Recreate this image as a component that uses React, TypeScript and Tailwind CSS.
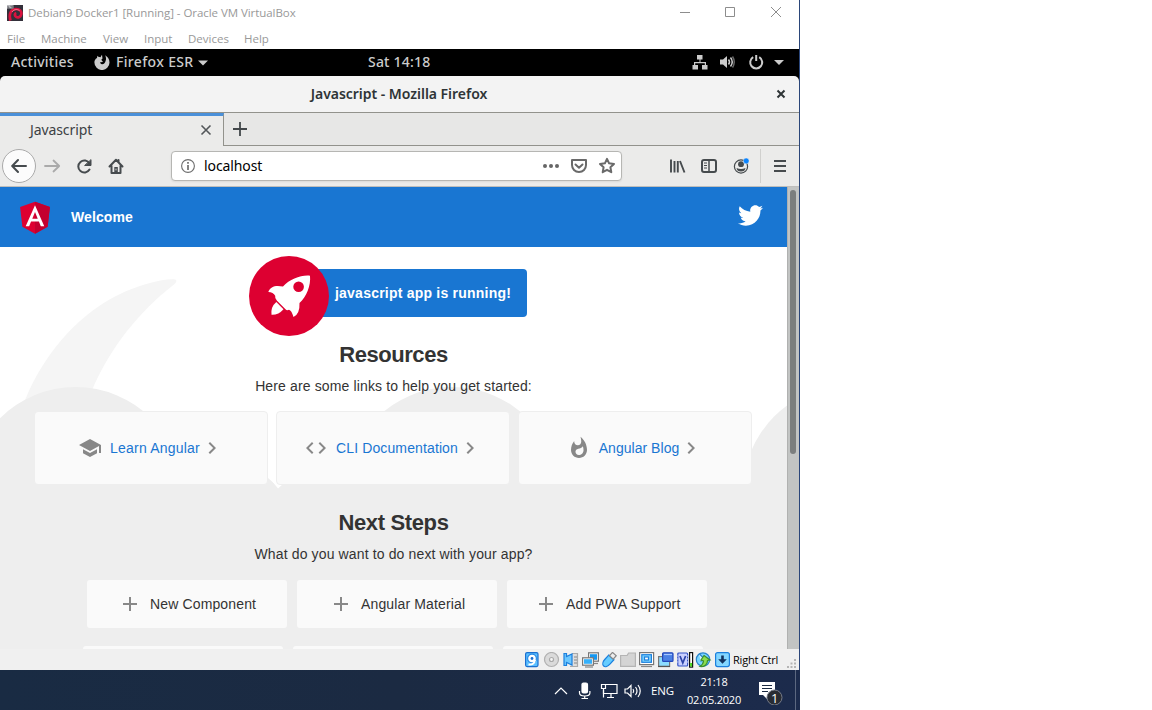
import React from "react";
import { FaTwitter } from "react-icons/fa";

type IconProps = { d: string; className?: string };

function MIcon({ d, className = "" }: IconProps) {
  return (
    <svg viewBox="0 0 24 24" className={`h-6 w-6 shrink-0 fill-[#888] ${className}`}>
      <path d={d} />
    </svg>
  );
}

const SCHOOL = "M5 13.18v4L12 21l7-3.82v-4L12 17l-7-3.82zM12 3L1 9l11 6 9-4.91V17h2V9L12 3z";
const CODE =
  "M9.4 16.6L4.8 12l4.6-4.6L8 6l-6 6 6 6 1.4-1.4zm5.2 0l4.6-4.6-4.6-4.6L16 6l6 6-6 6-1.4-1.4z";
const FIRE =
  "M13.5.67s.74 2.65.74 4.8c0 2.06-1.35 3.73-3.41 3.73-2.07 0-3.63-1.67-3.63-3.73l.03-.36C5.21 7.51 4 10.62 4 14c0 4.42 3.58 8 8 8s8-3.58 8-8C20 8.61 17.41 3.8 13.5.67zM11.71 19c-1.78 0-3.22-1.4-3.22-3.14 0-1.62 1.05-2.76 2.81-3.12 1.77-.36 3.6-1.21 4.62-2.58.39 1.29.59 2.65.59 4.04 0 2.65-2.15 4.8-4.8 4.8z";
const CHEVRON = "M10 6L8.59 7.41 13.17 12l-4.58 4.59L10 18l6-6z";
const PLUS = "M19 13h-6v6h-2v-6H5v-2h6V5h2v6h6v2z";

function HostTitleBar() {
  return (
    <div className="flex h-[25px] items-center bg-white font-['Open_Sans',sans-serif] text-[11.5px] text-[#999]">
      <svg viewBox="0 0 16 16" className="ml-[7px] h-4 w-4">
        <rect width="16" height="16" fill="#33303a" />
        <path d="M3.500 15.500C1.500 9 4 4 9 4c4 0 5.800 2.500 5.300 5.200-.5 2.600-3.200 3.800-5.200 2.600C7.300 10.700 7.500 8.500 9.300 8" fill="none" stroke="#d9133f" strokeWidth="2.700" />
        <path d="M5 7C6.500 4.700 9.500 3.700 12.500 5.500" fill="none" stroke="#ff7d96" strokeWidth="1" />
        <rect width="6.500" height="3.500" fill="#b9b9bd" />
        <path d="M1 1v2h1.500M4 .5v1.500h2M6 0v3.500" stroke="#4b4b50" strokeWidth=".7" fill="none" />
      </svg>
      <span className="ml-[5px] whitespace-nowrap tracking-[-0.055px]">Debian9 Docker1 [Running] - Oracle VM VirtualBox</span>
      <svg viewBox="0 0 120 25" className="ml-auto h-[25px] w-[120px]" fill="none" stroke="#8d8d8d">
        <path d="M1 12.500h10M46.500 7.500h9v9h-9zM92 7l10 10M102 7L92 17" />
      </svg>
    </div>
  );
}

function HostMenu() {
  return (
    <div className="flex h-6 items-center bg-white pt-[3px] pl-[7px] font-['Open_Sans',sans-serif] text-[11.5px] text-[#999]">
      <span className="w-[34px]">File</span>
      <span className="w-[62px]">Machine</span>
      <span className="w-[41px]">View</span>
      <span className="w-[44px]">Input</span>
      <span className="w-[56px]">Devices</span>
      <span>Help</span>
    </div>
  );
}

function GnomeBar() {
  return (
    <div className="flex h-[27px] items-center bg-black font-['Noto_Sans',sans-serif] text-[14px] leading-5 font-medium text-[#ccc]">
      <span className="ml-[11px] w-[83px] pb-[2px] tracking-[0.25px]">Activities</span>
      <svg viewBox="0 0 16 16" className="mb-px h-4 w-4">
        <path d="M8 .8C7.500 1.500 6.800 2.500 6.500 3.300L4.300 2.800 3.400 1.800 3 4.100C1.200 5 .4 6.800.4 8.500A7.500 7.500 0 0 0 15.500 8.500C15.500 5 13.500 2.500 11 1.300c1 1.400 1.300 3.300.8 5C11.200 8.800 9.800 10.500 8 10.300 6.700 10.200 6 9.200 6.200 8.300l2.800-.3-1.700-2.200L8.500 4.500Z" fill="#ccc" />
      </svg>
      <span className="ml-[6px] w-[81px] pb-[2px] tracking-[0.35px] whitespace-nowrap">Firefox ESR</span>
      <svg viewBox="0 0 10 6" className="ml-[1px] h-[6px] w-[10px]"><path d="M0 .5h10L5 5.500z" fill="#ccc" /></svg>
      <span className="ml-[160px] pb-[2px] tracking-[0.2px] whitespace-nowrap">Sat 14:18</span>
      <svg viewBox="0 0 92 16" className="mr-[15px] mb-px ml-auto h-4 w-[92px]" fill="#ccc">
        <path d="M5 1h5.500v4.500H8.500V8H14v3h1.500v4.500H10V11h2.800V9.200H3.200V11H6v4.500H.5V11H2V8h5.500V5.500H5z" />
        <path d="M28 5.500h3L35 2v12l-4-3.500h-3z" />
        <path d="M36.500 5.500q2 2.500 0 5M38.500 3.500q3.500 4.500 0 9" fill="none" stroke="#ccc" strokeWidth="1.500" />
        <path d="M40.500 2.500q3.500 5.500 0 11" fill="none" stroke="#666" strokeWidth="1.500" />
        <path d="M61.200 3.200a6 6 0 1 0 6 0M64.200 1v6" fill="none" stroke="#ccc" strokeWidth="2" />
        <path d="M82 6h10l-5 5z" />
      </svg>
    </div>
  );
}

function FirefoxTitle() {
  return (
    <div className="bg-black">
      <div className="flex h-9 items-center rounded-t-[5px] bg-[#f3f3f3] font-['Noto_Sans',sans-serif] text-[14px] leading-5 font-semibold text-[#2e3436]">
        <span className="w-[776px] pl-[22px] text-center tracking-[-0.03px]">
          Javascript - Mozilla Firefox
        </span>
        <svg viewBox="0 0 10 10" className="h-[10px] w-[10px]">
          <path d="M1.500 1.500l7 7M8.500 1.500l-7 7" stroke="#2e3436" strokeWidth="2" />
        </svg>
      </div>
    </div>
  );
}

function Tabs() {
  return (
    <div className="flex h-[34px] border-t border-[#92928c] bg-[#e7e7e6] font-['Noto_Sans',sans-serif]">
      <div className="flex w-[224px] items-center border-t-[3px] border-r border-t-[#4a90d9] border-r-[#92928c] bg-[#ebebea] text-[14px] leading-5 text-[#3c4144]">
        <span className="w-[170px] pb-[3px] pl-[30px] tracking-[-0.1px]">Javascript</span>
        <svg viewBox="0 0 12 12" className="mb-[2px] ml-[30px] h-3 w-3"><path d="M1.500 1.500l9 9M10.500 1.500l-9 9" stroke="#53575a" strokeWidth="1.600" /></svg>
      </div>
      <div className="flex flex-1 items-center border-b border-[#92928c] pl-[9px]">
        <svg viewBox="0 0 14 14" className="h-[14px] w-[14px]"><path d="M7 0v14M0 7h14" stroke="#42474a" strokeWidth="1.800" /></svg>
      </div>
    </div>
  );
}

function Toolbar() {
  return (
    <div className="flex h-[41px] items-center border-b border-[#bebebc] bg-[#ebebea] font-['Noto_Sans',sans-serif]">
      <div className="ml-[2px] flex h-[34px] w-[34px] items-center justify-center rounded-full border border-[#aaa] bg-[#fcfcfc]">
        <svg viewBox="0 0 16 16" className="h-4 w-4" fill="none" stroke="#464b4e" strokeWidth="2" strokeLinecap="round" strokeLinejoin="round"><path d="M15 8H1.500M7 2L1.200 8 7 14" /></svg>
      </div>
      <svg viewBox="0 0 80 18" className="ml-2 h-[18px] w-20" fill="none" stroke="#464b4e" strokeWidth="2" strokeLinecap="round" strokeLinejoin="round">
        <path d="M1 9h14M9.500 3.500L15.200 9l-5.700 5.500" stroke="#aaa" strokeWidth="1.800" />
        <path d="M45.500 6.500A6 6 0 1 0 45.500 12.500" />
        <path d="M47 3v5.500h-6z" fill="#464b4e" strokeWidth="1" />
        <path d="M65.500 9.500L72 2.800l6.500 6.700M67.500 9v7h9V9M74.500 3v2" />
        <path d="M70.300 10h3.500v6.500h-3.500z" fill="#464b4e" stroke="none" />
        <path d="M72 12v1" stroke="#fff" strokeWidth=".8" />
      </svg>
      <div className="ml-[47px] flex h-[30px] w-[451px] items-center rounded-[4px] border border-[#b6b6b3] bg-white text-[14px] leading-5 text-black shadow-[0_1px_2px_rgba(0,0,0,0.08)]">
        <svg viewBox="0 0 14 14" className="ml-[9px] h-[14px] w-[14px]" fill="none" stroke="#6d6d6d"><circle cx="7" cy="7" r="6.400" strokeWidth="1.100" /><path d="M7 6v5M7 3v1.700" strokeWidth="1.700" /></svg>
        <span className="ml-[9px] tracking-[-0.1px]">localhost</span>
        <svg viewBox="0 0 74 18" className="mr-[5px] ml-auto h-[18px] w-[74px]" fill="none" stroke="#6a6a6a" strokeWidth="2" strokeLinejoin="round" strokeLinecap="round">
          <g fill="#666" stroke="none"><circle cx="3" cy="9" r="2" /><circle cx="9" cy="9" r="2" /><circle cx="15" cy="9" r="2" /></g>
          <path d="M30 3h14v5c0 4-3 7-7 7s-7-3-7-7z" /><path d="M33.500 7.500l3.500 3.200 3.500-3.200" />
          <path d="M65 1.800l2.100 4.500 4.900.6-3.600 3.400.9 4.900-4.300-2.400-4.300 2.400.9-4.900L58 6.900l4.900-.6z" />
        </svg>
      </div>
      <svg viewBox="0 0 80 16" className="ml-[47px] h-4 w-20" fill="none" stroke="#464b4e" strokeWidth="2">
        <path d="M2 1.500v13M5.500 3v11.500M8.800 3v11.500M11 3l4.500 11.500" strokeWidth="1.900" />
        <rect x="33" y="2" width="14" height="12" rx="2" /><path d="M40 2v12" strokeWidth="1.500" /><path d="M35 5h3M35 7.500h3M35 10h3" strokeWidth="1" />
        <circle cx="72" cy="8.500" r="6.600" strokeWidth="1.200" /><circle cx="72" cy="6.200" r="2.900" fill="#464b4e" stroke="none" /><path d="M67.500 10q4.500 2 9 0-.5 3.500-4.500 3.500t-4.500-3.500" fill="#464b4e" stroke="none" />
        <circle cx="77.200" cy="2.900" r="2.900" fill="#0a84ff" stroke="#ebebea" strokeWidth=".5" />
      </svg>
      <div className="ml-[11px] h-[34px] w-px bg-[#d0d0ce]" />
      <svg viewBox="0 0 13 14" className="ml-[13px] h-[14px] w-[13px]"><path d="M0 2h12M0 7h12M0 12h12" stroke="#464b4e" strokeWidth="2" /></svg>
    </div>
  );
}

function Backdrop() {
  return (
    <svg viewBox="0 187 787 462" className="absolute inset-0 h-[462px] w-[787px]">
      <rect y="187" width="787" height="462" fill="#fff" />
      <path d="M173 279.300C178 279 177 282.500 173 285.200C140 311 111 346 92 390L70 430L20 415C37 360 83 300 150 283Q162 279.500 173 279.300Z" fill="#f5f5f5" />
      <g fill="#eee">
        <circle cx="75.500" cy="494" r="107" />
        <circle cx="452" cy="494" r="107" />
        <circle cx="850" cy="492" r="107" />
        <rect y="484" width="787" height="165" />
        <path d="M200 478h68l8 7H200z" />
      </g>
      <path d="M268 476l10 12.500 5-4.500V474z" fill="#fff" />
    </svg>
  );
}

function Rocket() {
  return (
    <svg viewBox="249 255.500 80 80" className="absolute top-[68.500px] left-[249px] h-20 w-20">
      <circle cx="289" cy="295.500" r="40" fill="#dd0031" />
      <path d="M310 275.200C301 274.300 290 278.500 283 286C276 284.500 270.500 285.500 268.300 291.500C271.500 291.600 274 293 275.200 295.300Q274.600 298 277 300.200L285.500 308.800Q287 310.300 289 309.200Q291.500 309.800 293.500 316.500Q300 313.500 299.500 302.500C306.500 296 311 285 310 275.200Z" fill="#fff" />
      <circle cx="298.600" cy="286.200" r="5.300" fill="#dd0031" />
      <path d="M276.300 301.500L283.500 308.700Q278.500 314.500 271.500 314.200Q270.500 306.500 276.300 301.500Z" fill="#fff" />
    </svg>
  );
}

function LinkCard({ icon, label, textClass }: { icon: string; label: string; textClass: string }) {
  return (
    <div className="flex h-[74px] w-[234px] items-center justify-center rounded-[4px] border border-[#eee] bg-[#fafafa]">
      <MIcon d={icon} />
      <span className={`mx-2 whitespace-nowrap text-[#1976d2] ${textClass}`}>{label}</span>
      <MIcon d={CHEVRON} className="-ml-2" />
    </div>
  );
}

function StepCard({ label, pad }: { label: string; pad: string }) {
  return (
    <div className={`flex h-12 w-[200px] items-center rounded-[3px] bg-[#fafafa] ${pad}`}>
      <MIcon d={PLUS} />
      <span className="ml-2 tracking-[0.14px] whitespace-nowrap">{label}</span>
    </div>
  );
}

function AngularPage() {
  return (
    <div className="relative h-[462px] w-[787px] overflow-hidden font-['Liberation_Sans',sans-serif] text-[14px] text-[#333]">
      <Backdrop />
      <div className="relative">
        <header className="flex h-[60px] items-center bg-[#1976d2] font-semibold text-white">
          <svg viewBox="0 0 250 250" className="ml-[15px] h-10 w-10">
            <path d="M125 30L31.900 63.200l14.200 123.100L125 230l78.900-43.700 14.200-123.100z" fill="#dd0031" />
            <path d="M125 30v200l78.900-43.700 14.200-123.100z" fill="#c3002f" />
            <path d="M125 52.100L66.800 182.600h21.700l11.700-29.200h49.400l11.700 29.200H183zm17 83.300h-34l17-40.900z" fill="#fff" />
          </svg>
          <span className="ml-4 tracking-[0.1px]">Welcome</span>
          <FaTwitter className="mr-6 mb-1 ml-auto h-[25px] w-[25px]" />
        </header>
        <div className="mt-[22px] ml-[289px] flex h-12 w-[238px] items-center rounded-[4px] bg-[#1976d2] pl-[46px] font-semibold tracking-[0.22px] whitespace-nowrap text-white">
          javascript app is running!
        </div>
        <Rocket />
        <h2 className="mt-[23px] text-center text-[22px] leading-[30px] font-bold tracking-[-0.45px]">Resources</h2>
        <p className="mt-[6px] text-center leading-5 tracking-[0.135px]">Here are some links to help you get started:</p>
        <div className="mt-[15px] ml-[34px] flex gap-2">
          <LinkCard icon={SCHOOL} label="Learn Angular" textClass="tracking-[0.2px]" />
          <LinkCard icon={CODE} label="CLI Documentation" textClass="tracking-[0.12px]" />
          <LinkCard icon={FIRE} label="Angular Blog" textClass="tracking-[0.03px]" />
        </div>
        <h2 className="mt-[23px] text-center text-[22px] leading-[30px] font-bold tracking-[-0.35px]">Next Steps</h2>
        <p className="mt-[6px] text-center leading-5 tracking-[0.135px]">What do you want to do next with your app?</p>
        <div className="mt-[16px] ml-[87px] flex gap-[10px]">
          <StepCard label="New Component" pad="pl-[31px]" />
          <StepCard label="Angular Material" pad="pl-[32px]" />
          <StepCard label="Add PWA Support" pad="pl-[27px]" />
        </div>
        <div className="mt-[18px] ml-[83px] flex gap-[10px]">
          <div className="h-12 w-[200px] rounded-[3px] bg-[#fafafa]" />
          <div className="h-12 w-[200px] rounded-[3px] bg-[#fafafa]" />
          <div className="h-12 w-[200px] rounded-[3px] bg-[#fafafa]" />
        </div>
      </div>
    </div>
  );
}

function StatusBar() {
  return (
    <div className="flex h-[21px] items-center bg-[#f0f0f0] font-['Open_Sans',sans-serif] text-[11px] text-black">
      <svg viewBox="0 0 206 16" className="mt-px ml-[525px] h-4 w-[206px]" strokeWidth="1.200">
        <rect x=".6" y=".6" width="12.400" height="14" rx="1.500" fill="#5cc0ff" stroke="#1b6fd0" />
        <circle cx="7" cy="6.500" r="4.400" fill="#fff" stroke="#2a8ae5" />
        <path d="M10 8c-.5 4-3.500 5-6.500 4.500" fill="none" stroke="#fff" strokeWidth="2" />
        <circle cx="7" cy="6.500" r="1.400" fill="#1b6fd0" />
        <circle cx="26.500" cy="7.500" r="7" fill="#dadada" stroke="#b0b0b0" />
        <circle cx="26.500" cy="7.500" r="2" fill="#f5f5f5" stroke="#aaa" />
        <path d="M47 1.500h5.500v13H45" fill="#ddd" stroke="#aaa" />
        <path d="M49 5h3M49 8h3M49 11h3" stroke="#888" />
        <path d="M39 1.500h2.500v3L47 2v11l-5.500-2.500v3H39z" fill="#6cc8ff" stroke="#1b7fdd" />
        <rect x="63.600" y=".8" width="9.800" height="8.400" fill="#fff" stroke="#777" />
        <rect x="65" y="2.200" width="7" height="5.600" fill="#1597f0" />
        <path d="M66 11.500h7" stroke="#888" />
        <rect x="57.600" y="5.800" width="10.800" height="7.400" fill="#fff" stroke="#777" />
        <rect x="59" y="7.200" width="8" height="4.600" fill="#35b0fa" />
        <path d="M60 15h8" stroke="#888" />
        <g transform="rotate(42 84 8)">
          <path d="M80.500 4.500h7v6c0 3-1.500 5.500-3.500 5.500s-3.500-2.500-3.500-5.500z" fill="#65ccff" stroke="#1b7fdd" />
          <path d="M81.500 0h5v4.500h-5z" fill="#eee" stroke="#888" />
        </g>
        <path d="M95.600 3.500h6.500l1.500-2.500h6.800v13.400H95.600z" fill="#d4d4d4" stroke="#b4b4b4" />
        <rect x="114.600" y=".6" width="14" height="12" fill="#fff" stroke="#777" />
        <rect x="116.800" y="2.700" width="9.600" height="7.600" fill="#7dd4ff" stroke="#1b7fdd" />
        <rect x="119.500" y="5" width="4" height="3" fill="#fff" stroke="#1b7fdd" />
        <path d="M116 14.500h11" stroke="#888" />
        <rect x="133.600" y="4.600" width="11" height="9.800" fill="#8cdcff" stroke="#777" />
        <path d="M133 14.500h12" stroke="#555" />
        <rect x="137.600" y=".8" width="10.400" height="8.600" rx="1" fill="#4a80e4" stroke="#2347bb" />
        <path d="M139 2.500h8" stroke="#a8c8ff" />
        <rect x="152.800" y="1" width="9.800" height="13" rx="1" fill="#c9d0ff" stroke="#3553c5" />
        <path d="M152.300 4h1M152.300 7h1M152.300 10h1M162 4h1M162 7h1M162 10h1" stroke="#dfe5ff" />
        <path d="M155 4l2.800 7 2.800-7" fill="none" stroke="#2c43a8" strokeWidth="1.700" />
        <rect x="164.600" y=".6" width="3" height="14.500" fill="#fff" stroke="#111" />
        <path d="M166.100 11v3.500" stroke="#48da20" strokeWidth="2" />
        <circle cx="178" cy="7.500" r="6.700" fill="#78d4ff" stroke="#2a84cc" />
        <path d="M174 1.500l5 5-3.500 3" fill="#d8f5ff" stroke="#2a84cc" />
        <path d="M179 3.500l6 4.500-2.500.5c0 4-3 6.500-7.500 6 2-1.500 3.500-3 3.500-5.500L176 8z" fill="#8cdd4e" stroke="#3c8e2e" />
        <rect x="190.600" y=".6" width="13.800" height="14" rx="2" fill="#83d6ff" stroke="#1b7fdd" />
        <path d="M196.200 3.500h2.600v3.700h3l-4.300 4.600-4.300-4.600h3z" fill="#12325f" />
      </svg>
      <span className="mt-px ml-[2px] tracking-[-0.2px] whitespace-nowrap">Right Ctrl</span>
      <svg viewBox="0 0 10 10" className="mt-2 mr-[2px] ml-auto h-[10px] w-[10px]" fill="#b5b5b5"><path d="M7 0h2v2H7zM7 3.500h2v2H7zM7 7h2v2H7zM3.500 3.500h2v2h-2zM3.500 7h2v2h-2zM0 7h2v2H0z" /></svg>
    </div>
  );
}

function Taskbar() {
  return (
    <div className="flex h-10 items-center bg-linear-to-r from-[#192b43] via-[#1b2a42] to-[#1c2b4c] font-['Open_Sans',sans-serif] text-[11.500px] text-white">
      <svg viewBox="0 0 90 20" className="mt-[2px] ml-[554px] h-5 w-[90px]" fill="none" stroke="#fff" strokeWidth="1.200">
        <path d="M1 13l6-6 6 6" />
        <rect x="28" y="2" width="5.500" height="10" rx="1.500" fill="#fff" /><path d="M25.500 10v2q0 3 5.200 3t5.200-3v-2M30.700 15v3M27.500 17.500h6.500" />
        <path d="M51 3.500h12v9H49.500V9M57 12.500v4M53 16.500h7" /><path d="M47.500 3.500h4v4h-4zM49.500 7.500v9" />
        <path d="M71 8h2.500l3.500-3.500v11L73.500 12H71zM79 8q1.500 2 0 4M81.500 6q3 4 0 8M84 4q4.500 6 0 12" />
      </svg>
      <span className="mt-px ml-[7px] w-[23px] tracking-[-0.2px]">ENG</span>
      <div className="ml-[12px] flex w-[56px] flex-col items-center pt-[1px] text-[11px] leading-[18px] tracking-[-0.2px]">
        <span>21:18</span>
        <span>02.05.2020</span>
      </div>
      <div className="relative mt-[1px] ml-[16px] h-7 w-[26px]">
        <svg viewBox="0 0 26 28" className="h-7 w-[26px]">
          <path d="M1 5h16v13H9v4l-4-4H1z" fill="#fff" /><path d="M4 8.500h10M4 11.500h10M4 14.500h6" stroke="#1b2a42" />
          <circle cx="16.500" cy="20.500" r="7.500" fill="#292c33" stroke="#777c88" />
        </svg>
        <span className="absolute top-[13px] left-[13px] text-[13px] leading-4">1</span>
      </div>
      <div className="ml-auto h-10 w-px bg-[#5c6880]" />
      <div className="w-1" />
    </div>
  );
}

export default function App() {
  return (
    <div className="h-[710px] w-full overflow-hidden bg-white">
      <div className="h-[710px] w-[800px]">
        <div className="border-r border-[#2b4679]">
          <HostTitleBar />
          <HostMenu />
          <GnomeBar />
          <FirefoxTitle />
          <Tabs />
          <Toolbar />
          <div className="flex bg-[#c2c4c3]">
            <AngularPage />
            <div className="h-[462px] flex-1 border-l border-[#b0b1b0] pt-[3px] pl-[2px]">
              <div className="h-[264px] w-[6px] rounded-full bg-[#7b7e7e]" />
            </div>
          </div>
          <StatusBar />
        </div>
        <Taskbar />
      </div>
    </div>
  );
}
